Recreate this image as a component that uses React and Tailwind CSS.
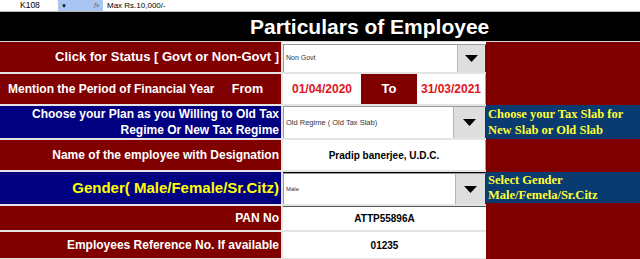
import React from "react";

const sans = { fontFamily: '"Liberation Sans", Arial, sans-serif' };

function Tri() {
  return (
    <svg width="13" height="7" viewBox="0 0 13 7">
      <polygon points="0,0 13,0 6.5,7" fill="#000" />
    </svg>
  );
}

function Dropdown({ text, size, btn }) {
  return (
    <div className="flex h-full w-full bg-white border-t border-l border-[#9a9a9a]">
      <div className="flex flex-1 items-center pl-[2px] text-[#333]" style={{ fontSize: size }}>
        {text}
      </div>
      <div
        className="flex h-full items-center justify-center bg-[#dedede] border-l border-[#b5b5b5] border-r border-r-[#2a2a6a]"
        style={{ width: btn }}
      >
        <Tri />
      </div>
    </div>
  );
}

function Row({ h, label, labelBg = "bg-[#800000]", children }) {
  return (
    <div className="flex gap-[2px]" style={{ height: h }}>
      <div className={`w-[281px] ${labelBg} flex items-center justify-end pr-[2px] text-right`}>{label}</div>
      <div className="w-[203px] flex">{children}</div>
    </div>
  );
}

export default function App() {
  return (
    <div className="w-[640px] h-[259px] overflow-hidden bg-white" style={sans}>
      {/* formula bar */}
      <div className="flex h-[11px] items-center bg-white text-[8.5px] text-black leading-none">
        <div className="w-[58px] pl-[20px]">K108</div>
        <div className="w-[45px] h-full bg-[#a9c5f2] flex items-center">
          <span className="ml-[3px] text-[6px]">▼</span>
          <span className="ml-auto mr-[4px] italic text-[#555] text-[7px]" style={{ fontFamily: '"Liberation Serif", serif' }}>fx</span>
        </div>
        <div className="pl-[4px] text-[8px]">Max Rs.10,000/-</div>
      </div>
      <div className="h-[1px] bg-[#b8b8b8]" />
      {/* title */}
      <div className="h-[29px] bg-black flex items-center pl-[250px]">
        <span className="text-white font-bold text-[21px] leading-none">Particulars of Employee</span>
      </div>
      <div className="h-[1px] bg-[#d8d8d8]" />

      <div className="flex">
        <div className="w-[486px] flex flex-col gap-[2px] bg-[#e4e4e4]">
          <Row h={30} label={<span className="text-white font-bold text-[13px]">Click for Status [ Govt or Non-Govt ]</span>}>
            <div className="w-full h-full pt-[2px] bg-white">
              <Dropdown text="Non Govt" size="7px" btn="29px" />
            </div>
          </Row>
          <div className="flex gap-[2px] h-[30px]">
            <div className="w-[281px] bg-[#800000] flex items-center pl-[8px] pr-[18px] text-white font-bold text-[12px]">
              <span>Mention the Period of Financial Year</span>
              <span className="ml-auto text-[12.5px]">From</span>
            </div>
            <div className="w-[203px] flex">
              <div className="w-[78px] bg-white flex items-center justify-center text-[#e0141c] font-bold text-[12px]">01/04/2020</div>
              <div className="w-[56px] bg-[#800000] flex items-center justify-center text-white font-bold text-[13px]">To</div>
              <div className="flex-1 bg-white flex items-center justify-center text-[#e0141c] font-bold text-[12px] border-r border-[#9a9a9a]">31/03/2021</div>
            </div>
          </div>
          <Row
            h={32}
            labelBg="bg-[#000080]"
            label={
              <span className="text-white font-bold text-[12px] leading-[16px]">
                Choose your Plan as you Willing to Old Tax
                <br />
                Regime Or New Tax Regime
              </span>
            }
          >
            <Dropdown text="Old Regime ( Old Tax Slab)" size="7.5px" btn="33px" />
          </Row>
          <Row h={30} label={<span className="text-white font-bold text-[12px]">Name of the employee with Designation</span>}>
            <div className="w-full bg-white flex items-center justify-center font-bold text-[10px] text-black border-r border-[#9a9a9a]">
              Pradip banerjee, U.D.C.
            </div>
          </Row>
          <Row h={32} labelBg="bg-[#000080]" label={<span className="text-[#ffff00] font-bold text-[15px]">Gender( Male/Female/Sr.Citz)</span>}>
            <div className="w-full h-full border-t border-black">
              <Dropdown text="Male" size="6px" btn="31px" />
            </div>
          </Row>
          <Row h={24} label={<span className="text-white font-bold text-[12px]">PAN No</span>}>
            <div className="w-full bg-white flex items-center justify-center font-bold text-[10px] text-black border-t border-[#555]">
              ATTP55896A
            </div>
          </Row>
          <Row h={26} label={<span className="text-white font-bold text-[12px]">Employees Reference No. If available</span>}>
            <div className="w-full bg-white flex items-center justify-center font-bold text-[10px] text-black">
              01235
            </div>
          </Row>
          <div className="h-0" />
        </div>

        <div className="flex-1 flex flex-col" style={{ fontFamily: '"Liberation Serif", "Times New Roman", serif' }}>
          <div className="h-[63px] bg-[#800000]" />
          <div className="h-[34px] bg-[#093a70] flex flex-col justify-center pl-[2px] text-[#ffff33] font-bold text-[12.5px] leading-[16px]">
            <span>Choose your Tax Slab for</span>
            <span>New Slab or Old Slab</span>
          </div>
          <div className="h-[33px] bg-[#800000]" />
          <div className="h-[31px] bg-[#093a70] flex flex-col justify-center pl-[2px] text-[#ffff33] font-bold text-[12.5px] leading-[15px]">
            <span>Select Gender</span>
            <span>Male/Femela/Sr.Citz</span>
          </div>
          <div className="flex-1 bg-[#800000]" />
        </div>
      </div>
    </div>
  );
}
